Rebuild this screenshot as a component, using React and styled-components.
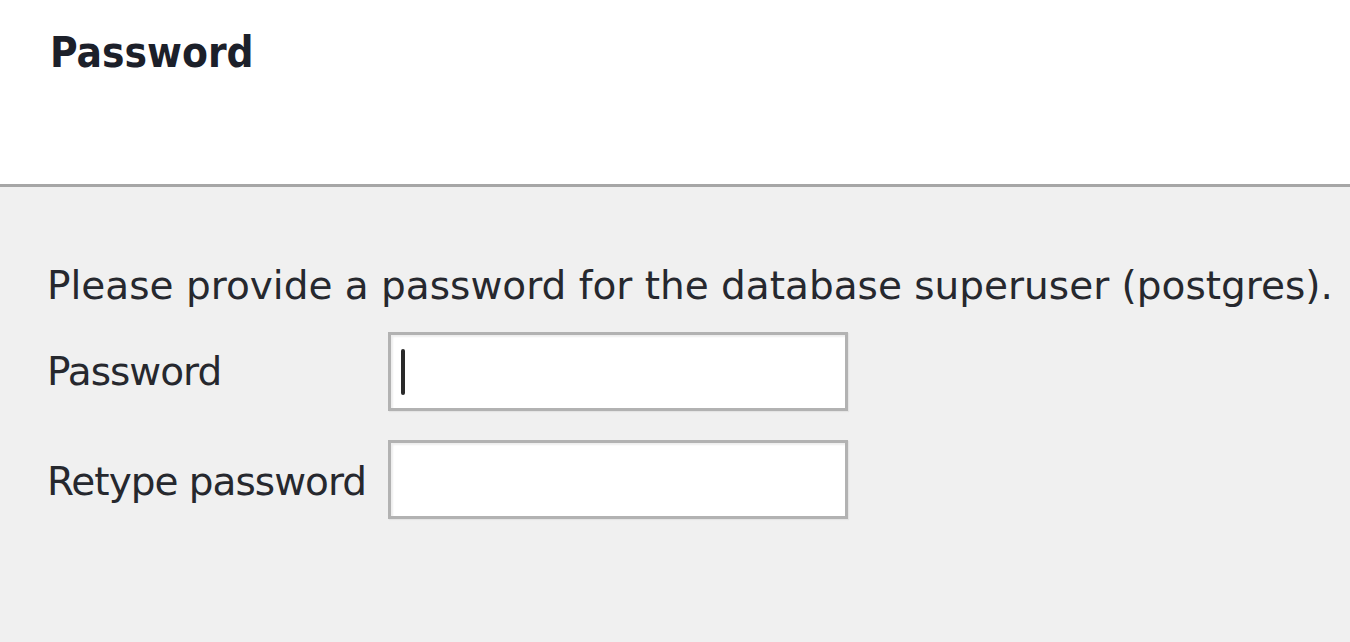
import React from "react";
import styled, { createGlobalStyle } from "styled-components";

const Global = createGlobalStyle`
  html, body {
    margin: 0;
    padding: 0;
    background: #f0f0f0;
  }
  body {
    font-family: "DejaVu Sans", "Liberation Sans", sans-serif;
    color: #26282e;
  }
`;

const Page = styled.div`
  width: 1350px;
  height: 642px;
  display: flex;
  flex-direction: column;
  overflow: hidden;
`;

const Header = styled.div`
  height: 187px;
  background: #ffffff;
  border-bottom: 3px solid #a6a6a6;
  box-shadow: 0 2px 0 #f7f7f7;
  padding: 30px 0 0 50px;
  box-sizing: border-box;
  flex-shrink: 0;
`;

const Title = styled.h1`
  margin: 0;
  font-family: "DejaVu Sans Condensed", "DejaVu Sans", sans-serif;
  font-stretch: condensed;
  font-size: 42px;
  font-weight: bold;
  line-height: 46px;
  color: #1c202a;
`;

const Body = styled.div`
  flex: 1;
  background: #f0f0f0;
  padding: 76px 0 0 47px;
  display: flex;
  flex-direction: column;
`;

const Intro = styled.p`
  margin: 0 0 23px;
  font-size: 39px;
  line-height: 46px;
  white-space: nowrap;
`;

const Row = styled.div`
  display: flex;
  align-items: center;
  height: 79px;
  margin-bottom: 29px;
`;

const Label = styled.label`
  width: 341px;
  padding-top: ${(p) => (p.$low ? "5px" : "0")};
  font-size: 39px;
  line-height: 46px;
  letter-spacing: -1px;
  white-space: nowrap;
`;

const Field = styled.div`
  position: relative;
  width: 460px;
  height: 79px;
  box-sizing: border-box;
  background: #ffffff;
  border: 3px solid #b2b2b2;
  box-shadow: inset 2px 2px 2px rgba(0, 0, 0, 0.07), 1px 1px 1px #e4e4e4;
`;

const Caret = styled.span`
  position: absolute;
  left: 10px;
  top: 14px;
  width: 4px;
  height: 46px;
  background: #2a2a2a;
  border-radius: 2px;
`;

export default function App() {
  return (
    <>
      <Global />
      <Page>
        <Header>
          <Title>Password</Title>
        </Header>
        <Body>
          <Intro>Please provide a password for the database superuser (postgres).</Intro>
          <Row>
            <Label>Password</Label>
            <Field>
              <Caret />
            </Field>
          </Row>
          <Row>
            <Label $low>Retype password</Label>
            <Field />
          </Row>
        </Body>
      </Page>
    </>
  );
}
